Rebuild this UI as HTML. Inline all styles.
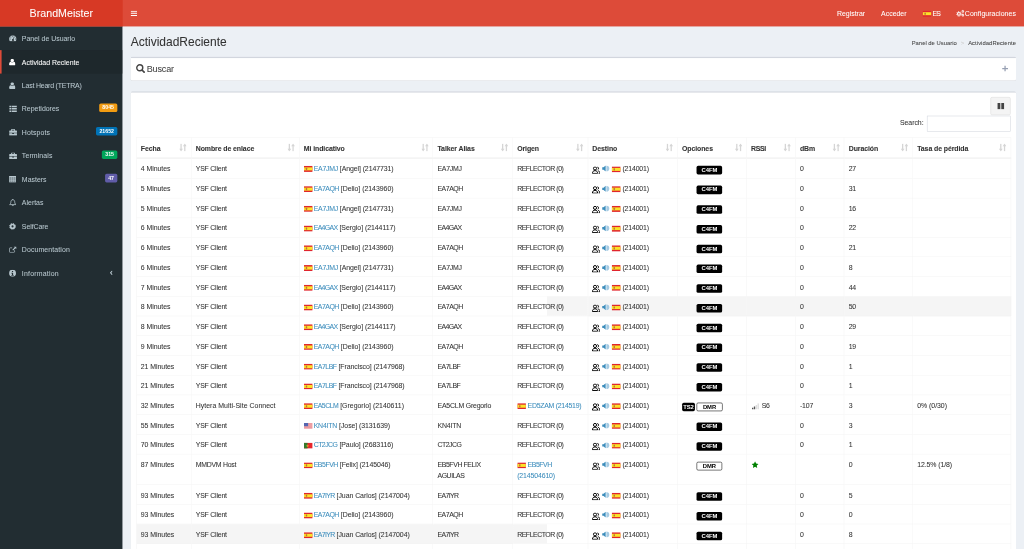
<!DOCTYPE html>
<html lang="es"><head><meta charset="utf-8"><title>BrandMeister - ActividadReciente</title>
<style>
*{box-sizing:border-box}
html,body{margin:0;padding:0;width:1024px;height:549px;overflow:hidden;background:#ecf0f5}
body{font-family:"Liberation Sans",sans-serif;font-size:13px;line-height:20px;color:#333}
#wrap{filter:opacity(1);-webkit-text-stroke:.1px;position:absolute;left:0;top:0;width:1920px;height:1030px;transform:scale(.533333);transform-origin:0 0;background:#ecf0f5;overflow:hidden}
a{color:#3c8dbc;text-decoration:none}
ul,ol{list-style:none;margin:0;padding:0}
svg.ic{display:inline-block;vertical-align:middle}
svg.flag{display:inline-block;vertical-align:middle}
/* header */
.hdr{position:absolute;left:0;top:0;width:1920px;height:50px;background:#dd4b39}
.logo{position:absolute;left:0;top:0;width:230px;height:50px;background:#d73925;color:#fff;font-size:20px;line-height:50px;text-align:center}
.nav{position:absolute;left:230px;right:0;top:0;height:50px;color:#fff}
.tog{position:absolute;left:15px;top:0;height:50px;line-height:48px;color:#fff}
.menu{position:absolute;right:0;top:0;height:50px;display:flex}
.menu li{padding:0 15px;line-height:50px;color:#fff;font-size:13px;white-space:nowrap}
.menu li span{position:relative;top:.8px}
.menu li svg.flag{top:.3px !important}
.menu li svg{position:relative;top:-1px}
.menu .es{letter-spacing:-1.300px;margin-left:2px}
.menu .cfg span{margin-left:.7px;letter-spacing:.13px}
/* sidebar */
.side{position:absolute;left:0;top:50px;width:230px;bottom:0;background:#222d32}
.side li a{display:block;height:44px;padding:12px 5px 12px 15px;color:#b8c7ce;border-left:3px solid transparent;position:relative;white-space:nowrap}
.side li.active a{color:#fff;background:#1e282c;border-left-color:#dd4b39}
.si{display:inline-block;width:23px;position:relative;left:-1px;top:-.5px}
.st{display:inline-block;position:relative;top:1px}
.bdg{position:absolute;right:10px;top:11.500px;height:16px;font-size:9.800px;font-weight:700;color:#fff;line-height:10px;padding:3px 6.300px 3px;border-radius:3px}
.ang{position:absolute;right:19px;top:11px}
/* content */
.cw{position:absolute;left:230px;top:50px;right:0;bottom:0;background:#ecf0f5}
.ch{position:relative;padding:15px 15px 0 15px;height:41.400px}
.ch h1{margin:0;font-size:22.500px;font-weight:400;line-height:26.400px;color:#333;position:relative;top:1.900px}
.bc{position:absolute;right:15px;top:20.500px;font-size:11px;display:flex;color:#444}
.bc li:last-child{letter-spacing:.1px}
.bc .sep{padding:0 7.500px;color:#ccc}
.content{padding:15px}
.box{position:relative;background:#fff;border-top:3px solid #d2d6de;border-radius:3px;margin-bottom:20px;box-shadow:0 1px 1px rgba(0,0,0,.1)}
.bh{padding:10px;height:41.500px;position:relative}
.bh h3{margin:0;font-size:17px;font-weight:400;line-height:20px;color:#444;position:relative;top:0px}
.bh h3 svg{position:relative;top:-1px}
.bh h3 span{margin-left:3px;letter-spacing:-.3px;position:relative;top:1px}
.tools{position:absolute;right:15px;top:9px;color:#97a0b3}
.bb{padding:10px}
.btnrow{height:34.850px;margin-top:-1.450px;text-align:right}
.btn{display:inline-block;width:38px;height:34px;border:1px solid #ddd;background:#f4f4f4;border-radius:3px;text-align:center;line-height:30px;color:#444}
.filter{height:35.150px;text-align:right;padding-top:0}
.filter label{display:inline-flex;align-items:center;height:29.400px;font-weight:400;vertical-align:top}
.sl{letter-spacing:-.08px;position:relative;top:-1px}
.inp{display:inline-block;vertical-align:middle;width:157.300px;height:29.400px;border:1px solid #d2d6de;margin-left:6px;background:#fff}
.tbl{width:1640px;table-layout:fixed;border-collapse:separate;border-spacing:0;margin-top:4.650px;border:1px solid #f4f4f4;border-right-width:0}
.tbl th,.tbl td{padding:9.900px 8px 6.100px;text-align:left;vertical-align:top;border-right:1px solid #f4f4f4;border-bottom:1px solid #f4f4f4;line-height:20px;overflow:hidden;white-space:nowrap}
.tbl th{position:relative;font-weight:700;border-bottom-width:3px;padding:11px 30px 5.700px 8px;letter-spacing:-.15px}
.tbl th.h8{letter-spacing:-.7px}
.srt{position:absolute;right:7.600px;top:7.500px;color:#333;opacity:.2;line-height:20px}
.tbl tr.hr td.c6,.tbl tr.hr td.c7,.tbl tr.hr td.c8,.tbl tr.hr td.c9,.tbl tr.hr td.c10,.tbl tr.hr td.c11{background:#f5f5f5}
.tbl tr.hr td.c5{background:linear-gradient(to right,#fff 63.300px,#f5f5f5 63.300px)}
.tbl tr.hle td.c1,.tbl tr.hle td.c2,.tbl tr.hle td.c3,.tbl tr.hle td.c4{background:#f5f5f5}
.tbl tr.hle td.c5{background:linear-gradient(to right,#f5f5f5 63.300px,#fff 63.300px)}
.c1{letter-spacing:-.08px}
.tg{margin-left:3.300px}
.c9,.c10,.c11{letter-spacing:-.5px}
.c3 svg.flag{margin-right:2px;position:relative;top:-.5px}
.c5 svg.flag{margin-right:3px;position:relative;top:-.5px}

.c4{white-space:normal !important}
.dst{color:#000;position:relative;top:1.100px;left:-1px}
.dst svg,.vol svg{vertical-align:middle}
.vol{margin-left:2.500px;position:relative;top:-1.300px}
.c6 svg.flag{margin-left:4.500px;position:relative;top:-.1px}
.lbl{display:inline-block;font-size:11px;font-weight:700;line-height:15.800px;height:15.800px;padding:0 6px;border-radius:3px;vertical-align:middle;text-align:center;letter-spacing:-.2px;position:relative;top:1.200px}
.blk{background:#000;color:#fff;width:48.500px}
.wht{background:#fff;color:#000;border:1.500px solid #000;width:48.500px;padding:0 4px;line-height:12.800px}
.ts{width:24.400px;padding-left:0;padding-right:0;margin-right:3px;letter-spacing:-.2px}
.tbl td.c7{text-align:right;padding-right:45px}
.star{color:#008000}
.sig{margin-right:5px;margin-left:2px}
.star svg{position:relative;top:-1.500px;left:1px}
.tbl tbody tr:first-child td{padding-top:9.200px;padding-bottom:6.600px}
.bdg,.lbl{-webkit-text-stroke:0}
.tbl th{-webkit-text-stroke:.15px}

</style></head>
<body>
<div id="wrap">
<header class="hdr"><a class="logo">BrandMeister</a><nav class="nav"><a class="tog"><svg class="ic" width="12" height="10" viewBox="0 0 12 10"><path fill="currentColor" d="M0 0h12v2H0zM0 4h12v2H0zM0 8h12v2H0z"/></svg></a><ul class="menu"><li><span>Registrar</span></li><li><span>Acceder</span></li><li class="lang"><svg class="flag" width="16.5" height="11.3" viewBox="0 0 16 11"><rect width="16" height="11" fill="#e0252d"/><rect y="2.750" width="16" height="5.500" fill="#fbe22a"/><rect x="3.200" y="3.600" width="2.600" height="3.800" rx=".6" fill="#c0703a"/></svg><span class="es">ES</span></li><li class="cfg"><svg class="ic" width="15.4" height="14" viewBox="0 0 15.400 14"><g fill="currentColor" fill-rule="evenodd"><path d="M1.2999999999999998 8a3.7 3.7 0 1 0 7.4 0a3.7 3.7 0 1 0 -7.4 0zM3.4 8a1.6 1.6 0 1 0 3.2 0a1.6 1.6 0 1 0 -3.2 0z"/><path d="M10.3 3.5a2.1 2.1 0 1 0 4.2 0a2.1 2.1 0 1 0 -4.2 0zM11.5 3.5a0.9 0.9 0 1 0 1.8 0a0.9 0.9 0 1 0 -1.8 0z"/><path d="M10.3 10.5a2.1 2.1 0 1 0 4.2 0a2.1 2.1 0 1 0 -4.2 0zM11.5 10.5a0.9 0.9 0 1 0 1.8 0a0.9 0.9 0 1 0 -1.8 0z"/></g><g fill="none" stroke="currentColor"><circle cx="5" cy="8" r="4.400" stroke-width="1.700" stroke-dasharray="1.750 1.706"/><circle cx="12.400" cy="3.500" r="2.600" stroke-width="1" stroke-dasharray="1.050 .992"/><circle cx="12.400" cy="10.500" r="2.600" stroke-width="1" stroke-dasharray="1.050 .992"/></g></svg><span>Configuraciones</span></li></ul></nav></header>
<aside class="side"><ul>
<li class=""><a><span class="si"><svg class="ic" width="14" height="12" viewBox="0 0 14 12"><path fill="currentColor" fill-rule="evenodd" d="M7 0a7 7 0 0 1 5.900 10.800c-.2.300-.5.400-.8.400H1.900c-.3 0-.6-.1-.8-.4A7 7 0 0 1 7 0zM6.1 2a0.9 0.9 0 1 0 1.8 0a0.9 0.9 0 1 0 -1.8 0zM2.5 3.5a0.9 0.9 0 1 0 1.8 0a0.9 0.9 0 1 0 -1.8 0zM9.7 3.5a0.9 0.9 0 1 0 1.8 0a0.9 0.9 0 1 0 -1.8 0zM1.1 7a0.9 0.9 0 1 0 1.8 0a0.9 0.9 0 1 0 -1.8 0zM11.1 7a0.9 0.9 0 1 0 1.8 0a0.9 0.9 0 1 0 -1.8 0zM8.500 3.800l.9.300-1.100 3.400a1.800 1.800 0 1 1-.9-.3z"/></svg></span><span class="st">Panel de Usuario</span></a></li>
<li class="active"><a><span class="si"><svg class="ic" width="12" height="13" viewBox="0 0 11 12"><path fill="currentColor" d="M2.5 3a3 3 0 1 0 6 0a3 3 0 1 0 -6 0zM0 10.200c0-2.500.8-4.400 2.600-4.700.8.700 1.800 1.100 2.900 1.100s2.100-.4 2.900-1.100c1.800.3 2.600 2.200 2.600 4.700 0 1.100-.8 1.800-1.800 1.800H1.800c-1 0-1.800-.7-1.800-1.800z"/></svg></span><span class="st">Actividad Reciente</span></a></li>
<li class=""><a><span class="si"><svg class="ic" width="12" height="13" viewBox="0 0 11 12"><path fill="currentColor" d="M2.5 3a3 3 0 1 0 6 0a3 3 0 1 0 -6 0zM0 10.200c0-2.500.8-4.400 2.600-4.700.8.700 1.800 1.100 2.900 1.100s2.100-.4 2.900-1.100c1.800.3 2.600 2.200 2.600 4.700 0 1.100-.8 1.800-1.800 1.800H1.800c-1 0-1.800-.7-1.800-1.800z"/></svg></span><span class="st" style="letter-spacing:-.36px">Last Heard (TETRA)</span></a></li>
<li class=""><a><span class="si"><svg class="ic" width="15" height="12" viewBox="0 0 14 12"><path fill="currentColor" d="M0 0h3.600v3H0zm4.600 0H14v3H4.600zM0 4.500h3.600v3H0zm4.600 0H14v3H4.600zM0 9h3.600v3H0zm4.600 0H14v3H4.600z"/></svg></span><span class="st">Repetidores</span><small class="bdg" style="background:#f39c12">8045</small></a></li>
<li class=""><a><span class="si"><svg class="ic" width="15" height="12.5" viewBox="0 0 14 12"><path fill="currentColor" fill-rule="evenodd" d="M4.500 0h5c.55 0 1 .45 1 1v1.500H13c.55 0 1 .45 1 1v3H0v-3c0-.55.45-1 1-1h2.500V1c0-.55.45-1 1-1zM5 1.200v1.300h4V1.200zM0 7.500h5.500v1.300h3V7.500H14V11c0 .55-.45 1-1 1H1c-.55 0-1-.45-1-1z"/></svg></span><span class="st" style="letter-spacing:.2px">Hotspots</span><small class="bdg" style="background:#0073b7">21652</small></a></li>
<li class=""><a><span class="si"><svg class="ic" width="15" height="12.5" viewBox="0 0 14 12"><path fill="currentColor" fill-rule="evenodd" d="M4.500 0h5c.55 0 1 .45 1 1v1.500H13c.55 0 1 .45 1 1v3H0v-3c0-.55.45-1 1-1h2.500V1c0-.55.45-1 1-1zM5 1.200v1.300h4V1.200zM0 7.500h5.500v1.300h3V7.500H14V11c0 .55-.45 1-1 1H1c-.55 0-1-.45-1-1z"/></svg></span><span class="st" style="letter-spacing:.2px">Terminals</span><small class="bdg" style="background:#00a65a">315</small></a></li>
<li class=""><a><span class="si"><svg class="ic" width="13" height="12" viewBox="0 0 13 12"><rect width="13" height="12" rx="1" fill="currentColor" opacity=".55"/><path fill="currentColor" d="M0 0h13v2.200H0zM0 5h13v1.300H0zM0 8.300h13v1.300H0zM0 11h13v1H0zM0 0h1v12H0zM12 0h1v12h-1zM4.300 0h.9v12h-.9zM8 0h.9v12H8z"/></svg></span><span class="st">Masters</span><small class="bdg" style="background:#605ca8">47</small></a></li>
<li class=""><a><span class="si"><svg class="ic" width="14" height="14" viewBox="0 0 14 14"><path fill="none" stroke="currentColor" stroke-width="1.450" stroke-linejoin="round" d="M7 1.600c-2.300 0-3.600 1.700-3.600 3.800 0 2.700-.9 4-2.400 5.200h12c-1.500-1.200-2.400-2.500-2.400-5.200 0-2.100-1.300-3.800-3.600-3.800zM5.600 11.200a1.400 1.400 0 0 0 2.800 0"/><circle cx="7" cy=".9" r=".9" fill="currentColor"/></svg></span><span class="st">Alertas</span></a></li>
<li class=""><a><span class="si"><svg class="ic" width="13" height="13" viewBox="0 0 12 12"><path fill="currentColor" fill-rule="evenodd" d="M1.2000000000000002 6a4.8 4.8 0 1 0 9.6 0a4.8 4.8 0 1 0 -9.6 0zM4.2 6a1.8 1.8 0 1 0 3.6 0a1.8 1.8 0 1 0 -3.6 0z"/><circle cx="6" cy="6" r="5.200" fill="none" stroke="currentColor" stroke-width="1.600" stroke-dasharray="2.100 1.984"/></svg></span><span class="st" style="letter-spacing:-.15px">SelfCare</span></a></li>
<li class=""><a><span class="si"><svg class="ic" width="14" height="12" viewBox="0 0 14 12"><path fill="none" stroke="currentColor" stroke-width="1.400" stroke-linejoin="round" d="M10.300 7.300v2.800c0 .7-.5 1.200-1.200 1.200H1.900c-.7 0-1.200-.5-1.200-1.200V3.900c0-.7.5-1.200 1.200-1.200h3.900"/><path fill="currentColor" d="M8.500 0H14v5.500l-2-2-4.300 4.300-1.500-1.500L10.500 2z"/></svg></span><span class="st" style="letter-spacing:.2px">Documentation</span></a></li>
<li class=""><a><span class="si"><svg class="ic" width="13" height="13" viewBox="1 1 14 14"><path fill="currentColor" fill-rule="evenodd" d="M8 1a7 7 0 1 1 0 14A7 7 0 0 1 8 1zm-1.200 2.300v2h2.400v-2zm-1.200 3.500v1.300h1.200v3.500H5.600v1.300h4.800v-1.300H9.200V6.800z"/></svg></span><span class="st" style="letter-spacing:.38px">Information</span><span class="ang"><svg class="ic" width="5.5" height="9" viewBox="0 0 5.500 9"><path fill="none" stroke="currentColor" stroke-width="1.900" d="M4.700.7 1.300 4.500l3.400 3.800"/></svg></span></a></li>
</ul></aside>
<div class="cw">
<section class="ch"><h1>ActividadReciente</h1><ol class="bc"><li>Panel de Usuario</li><li class="sep">&gt;</li><li>ActividadReciente</li></ol></section>
<section class="content">
<div class="box b1"><div class="bh"><h3><svg class="ic" width="17" height="17" viewBox="0 0 15.400 15.400"><circle cx="6.400" cy="6.400" r="5.100" fill="none" stroke="currentColor" stroke-width="2.400"/><path stroke="currentColor" stroke-width="2.900" stroke-linecap="round" d="M10.600 10.600 13.800 13.800"/></svg><span>Buscar</span></h3><span class="tools"><svg class="ic" width="11" height="11" viewBox="2.500 2.500 11 11"><path fill="currentColor" d="M6.800 2.500h2.400v4.300h4.300v2.400H9.200v4.300H6.800V9.200H2.500V6.800h4.300z"/></svg></span></div></div>
<div class="box b2"><div class="bb">
<div class="btnrow"><a class="btn"><svg class="ic" width="13" height="12.5" viewBox="0 0 13 12.500"><path fill="currentColor" d="M.4 0h4.800c.2 0 .4.200.4.400v11.700c0 .2-.2.400-.4.400H.4c-.2 0-.4-.2-.4-.4V.4C0 .2.200 0 .4 0zm7.400 0h4.800c.2 0 .4.200.4.400v11.700c0 .2-.2.400-.4.400H7.800c-.2 0-.4-.2-.4-.4V.4c0-.2.200-.4.400-.4z"/></svg></a></div>
<div class="filter"><label><span class="sl">Search:</span><span class="inp"></span></label></div>
<table class="tbl"><colgroup><col style="width:103px"><col style="width:202.6px"><col style="width:250.7px"><col style="width:149.4px"><col style="width:141px"><col style="width:168px"><col style="width:129.7px"><col style="width:91.5px"><col style="width:91.5px"><col style="width:128.4px"><col style="width:184px"></colgroup>
<thead><tr><th class="h1"><span>Fecha</span><i class="srt"><svg class="ic" width="14" height="15" viewBox="0 0 14 15"><path fill="currentColor" d="M2.300 .5h2.400V10H7L3.500 15 0 10h2.300zM11.700 14.500H9.300V5H7L10.500 0 14 5h-2.300z"/></svg></i></th><th class="h2"><span>Nombre de enlace</span><i class="srt"><svg class="ic" width="14" height="15" viewBox="0 0 14 15"><path fill="currentColor" d="M2.300 .5h2.400V10H7L3.500 15 0 10h2.300zM11.700 14.500H9.300V5H7L10.500 0 14 5h-2.300z"/></svg></i></th><th class="h3"><span>Mi indicativo</span><i class="srt"><svg class="ic" width="14" height="15" viewBox="0 0 14 15"><path fill="currentColor" d="M2.300 .5h2.400V10H7L3.500 15 0 10h2.300zM11.700 14.500H9.300V5H7L10.500 0 14 5h-2.300z"/></svg></i></th><th class="h4"><span>Talker Alias</span><i class="srt"><svg class="ic" width="14" height="15" viewBox="0 0 14 15"><path fill="currentColor" d="M2.300 .5h2.400V10H7L3.500 15 0 10h2.300zM11.700 14.500H9.300V5H7L10.500 0 14 5h-2.300z"/></svg></i></th><th class="h5"><span>Origen</span><i class="srt"><svg class="ic" width="14" height="15" viewBox="0 0 14 15"><path fill="currentColor" d="M2.300 .5h2.400V10H7L3.500 15 0 10h2.300zM11.700 14.500H9.300V5H7L10.500 0 14 5h-2.300z"/></svg></i></th><th class="h6"><span>Destino</span><i class="srt"><svg class="ic" width="14" height="15" viewBox="0 0 14 15"><path fill="currentColor" d="M2.300 .5h2.400V10H7L3.500 15 0 10h2.300zM11.700 14.500H9.300V5H7L10.500 0 14 5h-2.300z"/></svg></i></th><th class="h7"><span>Opciones</span><i class="srt"><svg class="ic" width="14" height="15" viewBox="0 0 14 15"><path fill="currentColor" d="M2.300 .5h2.400V10H7L3.500 15 0 10h2.300zM11.700 14.500H9.300V5H7L10.500 0 14 5h-2.300z"/></svg></i></th><th class="h8"><span>RSSI</span><i class="srt"><svg class="ic" width="14" height="15" viewBox="0 0 14 15"><path fill="currentColor" d="M2.300 .5h2.400V10H7L3.500 15 0 10h2.300zM11.700 14.500H9.300V5H7L10.500 0 14 5h-2.300z"/></svg></i></th><th class="h9"><span>dBm</span><i class="srt"><svg class="ic" width="14" height="15" viewBox="0 0 14 15"><path fill="currentColor" d="M2.300 .5h2.400V10H7L3.500 15 0 10h2.300zM11.700 14.500H9.300V5H7L10.500 0 14 5h-2.300z"/></svg></i></th><th class="h10"><span>Duración</span><i class="srt"><svg class="ic" width="14" height="15" viewBox="0 0 14 15"><path fill="currentColor" d="M2.300 .5h2.400V10H7L3.500 15 0 10h2.300zM11.700 14.500H9.300V5H7L10.500 0 14 5h-2.300z"/></svg></i></th><th class="h11"><span>Tasa de pérdida</span><i class="srt"><svg class="ic" width="14" height="15" viewBox="0 0 14 15"><path fill="currentColor" d="M2.300 .5h2.400V10H7L3.500 15 0 10h2.300zM11.700 14.500H9.300V5H7L10.500 0 14 5h-2.300z"/></svg></i></th></tr></thead>
<tbody>
<tr><td class="c1">4 Minutes</td><td class="c2"><span style="letter-spacing:-0.40px">YSF Client</span></td><td class="c3"><svg class="flag" width="16.5" height="11.3" viewBox="0 0 16 11"><rect width="16" height="11" fill="#e0252d"/><rect y="2.750" width="16" height="5.500" fill="#fbe22a"/><rect x="3.200" y="3.600" width="2.600" height="3.800" rx=".6" fill="#c0703a"/></svg><a style="letter-spacing:-0.48px">EA7JMJ</a> <span style="letter-spacing:-0.17px">[Angel] (2147731)</span></td><td class="c4"><span style="letter-spacing:-0.48px">EA7JMJ</span></td><td class="c5"><span style="letter-spacing:-0.87px">REFLECTOR (0)</span></td><td class="c6"><span class="dst"><svg class="ic" width="15.5" height="14" viewBox=".2 .8 15.900 14.200"><g fill="none" stroke="currentColor" stroke-width="1.900"><circle cx="6" cy="4.600" r="3"/><path d="M1 14.200c0-3.300 1.600-5.300 5-5.300s5 2 5 5.300z" stroke-linejoin="round"/><path d="M10.500 1.800a2.800 2.800 0 0 1 .6 5.300M12 9.200c2.300.4 3.300 2.200 3.300 5H13"/></g></svg></span><span class="vol"><svg class="ic" width="14" height="12" viewBox="0 0 14 12"><path fill="#a5cbe3" d="M8 .3c3.600.6 5.800 2.900 5.800 5.700s-2.200 5.100-5.800 5.700z"/><path fill="#3c8dbc" d="M0 3.800h2.700L6.600.5v11L2.700 8.200H0z"/></svg></span><svg class="flag" width="16.5" height="11.3" viewBox="0 0 16 11"><rect width="16" height="11" fill="#e0252d"/><rect y="2.750" width="16" height="5.500" fill="#fbe22a"/><rect x="3.200" y="3.600" width="2.600" height="3.800" rx=".6" fill="#c0703a"/></svg><span class="tg" style="letter-spacing:-0.28px">(214001)</span></td><td class="c7"><span class="lbl blk">C4FM</span></td><td class="c8"></td><td class="c9">0</td><td class="c10">27</td><td class="c11"></td></tr>
<tr><td class="c1">5 Minutes</td><td class="c2"><span style="letter-spacing:-0.40px">YSF Client</span></td><td class="c3"><svg class="flag" width="16.5" height="11.3" viewBox="0 0 16 11"><rect width="16" height="11" fill="#e0252d"/><rect y="2.750" width="16" height="5.500" fill="#fbe22a"/><rect x="3.200" y="3.600" width="2.600" height="3.800" rx=".6" fill="#c0703a"/></svg><a style="letter-spacing:-0.91px">EA7AQH</a> <span style="letter-spacing:-0.05px">[Delio] (2143960)</span></td><td class="c4"><span style="letter-spacing:-0.91px">EA7AQH</span></td><td class="c5"><span style="letter-spacing:-0.87px">REFLECTOR (0)</span></td><td class="c6"><span class="dst"><svg class="ic" width="15.5" height="14" viewBox=".2 .8 15.900 14.200"><g fill="none" stroke="currentColor" stroke-width="1.900"><circle cx="6" cy="4.600" r="3"/><path d="M1 14.200c0-3.300 1.600-5.300 5-5.300s5 2 5 5.300z" stroke-linejoin="round"/><path d="M10.500 1.800a2.800 2.800 0 0 1 .6 5.300M12 9.200c2.300.4 3.300 2.200 3.300 5H13"/></g></svg></span><span class="vol"><svg class="ic" width="14" height="12" viewBox="0 0 14 12"><path fill="#a5cbe3" d="M8 .3c3.600.6 5.800 2.900 5.800 5.700s-2.200 5.100-5.800 5.700z"/><path fill="#3c8dbc" d="M0 3.800h2.700L6.600.5v11L2.700 8.200H0z"/></svg></span><svg class="flag" width="16.5" height="11.3" viewBox="0 0 16 11"><rect width="16" height="11" fill="#e0252d"/><rect y="2.750" width="16" height="5.500" fill="#fbe22a"/><rect x="3.200" y="3.600" width="2.600" height="3.800" rx=".6" fill="#c0703a"/></svg><span class="tg" style="letter-spacing:-0.28px">(214001)</span></td><td class="c7"><span class="lbl blk">C4FM</span></td><td class="c8"></td><td class="c9">0</td><td class="c10">31</td><td class="c11"></td></tr>
<tr><td class="c1">5 Minutes</td><td class="c2"><span style="letter-spacing:-0.40px">YSF Client</span></td><td class="c3"><svg class="flag" width="16.5" height="11.3" viewBox="0 0 16 11"><rect width="16" height="11" fill="#e0252d"/><rect y="2.750" width="16" height="5.500" fill="#fbe22a"/><rect x="3.200" y="3.600" width="2.600" height="3.800" rx=".6" fill="#c0703a"/></svg><a style="letter-spacing:-0.48px">EA7JMJ</a> <span style="letter-spacing:-0.17px">[Angel] (2147731)</span></td><td class="c4"><span style="letter-spacing:-0.48px">EA7JMJ</span></td><td class="c5"><span style="letter-spacing:-0.87px">REFLECTOR (0)</span></td><td class="c6"><span class="dst"><svg class="ic" width="15.5" height="14" viewBox=".2 .8 15.900 14.200"><g fill="none" stroke="currentColor" stroke-width="1.900"><circle cx="6" cy="4.600" r="3"/><path d="M1 14.200c0-3.300 1.600-5.300 5-5.300s5 2 5 5.300z" stroke-linejoin="round"/><path d="M10.500 1.800a2.800 2.800 0 0 1 .6 5.300M12 9.200c2.300.4 3.300 2.200 3.300 5H13"/></g></svg></span><span class="vol"><svg class="ic" width="14" height="12" viewBox="0 0 14 12"><path fill="#a5cbe3" d="M8 .3c3.600.6 5.800 2.900 5.800 5.700s-2.200 5.100-5.800 5.700z"/><path fill="#3c8dbc" d="M0 3.800h2.700L6.600.5v11L2.700 8.200H0z"/></svg></span><svg class="flag" width="16.5" height="11.3" viewBox="0 0 16 11"><rect width="16" height="11" fill="#e0252d"/><rect y="2.750" width="16" height="5.500" fill="#fbe22a"/><rect x="3.200" y="3.600" width="2.600" height="3.800" rx=".6" fill="#c0703a"/></svg><span class="tg" style="letter-spacing:-0.28px">(214001)</span></td><td class="c7"><span class="lbl blk">C4FM</span></td><td class="c8"></td><td class="c9">0</td><td class="c10">16</td><td class="c11"></td></tr>
<tr><td class="c1">6 Minutes</td><td class="c2"><span style="letter-spacing:-0.40px">YSF Client</span></td><td class="c3"><svg class="flag" width="16.5" height="11.3" viewBox="0 0 16 11"><rect width="16" height="11" fill="#e0252d"/><rect y="2.750" width="16" height="5.500" fill="#fbe22a"/><rect x="3.200" y="3.600" width="2.600" height="3.800" rx=".6" fill="#c0703a"/></svg><a style="letter-spacing:-1.21px">EA4GAX</a> <span style="letter-spacing:-0.08px">[Sergio] (2144117)</span></td><td class="c4"><span style="letter-spacing:-1.21px">EA4GAX</span></td><td class="c5"><span style="letter-spacing:-0.87px">REFLECTOR (0)</span></td><td class="c6"><span class="dst"><svg class="ic" width="15.5" height="14" viewBox=".2 .8 15.900 14.200"><g fill="none" stroke="currentColor" stroke-width="1.900"><circle cx="6" cy="4.600" r="3"/><path d="M1 14.200c0-3.300 1.600-5.300 5-5.300s5 2 5 5.300z" stroke-linejoin="round"/><path d="M10.500 1.800a2.800 2.800 0 0 1 .6 5.300M12 9.200c2.300.4 3.300 2.200 3.300 5H13"/></g></svg></span><span class="vol"><svg class="ic" width="14" height="12" viewBox="0 0 14 12"><path fill="#a5cbe3" d="M8 .3c3.600.6 5.800 2.900 5.800 5.700s-2.200 5.100-5.800 5.700z"/><path fill="#3c8dbc" d="M0 3.800h2.700L6.600.5v11L2.700 8.200H0z"/></svg></span><svg class="flag" width="16.5" height="11.3" viewBox="0 0 16 11"><rect width="16" height="11" fill="#e0252d"/><rect y="2.750" width="16" height="5.500" fill="#fbe22a"/><rect x="3.200" y="3.600" width="2.600" height="3.800" rx=".6" fill="#c0703a"/></svg><span class="tg" style="letter-spacing:-0.28px">(214001)</span></td><td class="c7"><span class="lbl blk">C4FM</span></td><td class="c8"></td><td class="c9">0</td><td class="c10">22</td><td class="c11"></td></tr>
<tr><td class="c1">6 Minutes</td><td class="c2"><span style="letter-spacing:-0.40px">YSF Client</span></td><td class="c3"><svg class="flag" width="16.5" height="11.3" viewBox="0 0 16 11"><rect width="16" height="11" fill="#e0252d"/><rect y="2.750" width="16" height="5.500" fill="#fbe22a"/><rect x="3.200" y="3.600" width="2.600" height="3.800" rx=".6" fill="#c0703a"/></svg><a style="letter-spacing:-0.91px">EA7AQH</a> <span style="letter-spacing:-0.05px">[Delio] (2143960)</span></td><td class="c4"><span style="letter-spacing:-0.91px">EA7AQH</span></td><td class="c5"><span style="letter-spacing:-0.87px">REFLECTOR (0)</span></td><td class="c6"><span class="dst"><svg class="ic" width="15.5" height="14" viewBox=".2 .8 15.900 14.200"><g fill="none" stroke="currentColor" stroke-width="1.900"><circle cx="6" cy="4.600" r="3"/><path d="M1 14.200c0-3.300 1.600-5.300 5-5.300s5 2 5 5.300z" stroke-linejoin="round"/><path d="M10.500 1.800a2.800 2.800 0 0 1 .6 5.300M12 9.200c2.300.4 3.300 2.200 3.300 5H13"/></g></svg></span><span class="vol"><svg class="ic" width="14" height="12" viewBox="0 0 14 12"><path fill="#a5cbe3" d="M8 .3c3.600.6 5.800 2.900 5.800 5.700s-2.200 5.100-5.800 5.700z"/><path fill="#3c8dbc" d="M0 3.800h2.700L6.600.5v11L2.700 8.200H0z"/></svg></span><svg class="flag" width="16.5" height="11.3" viewBox="0 0 16 11"><rect width="16" height="11" fill="#e0252d"/><rect y="2.750" width="16" height="5.500" fill="#fbe22a"/><rect x="3.200" y="3.600" width="2.600" height="3.800" rx=".6" fill="#c0703a"/></svg><span class="tg" style="letter-spacing:-0.28px">(214001)</span></td><td class="c7"><span class="lbl blk">C4FM</span></td><td class="c8"></td><td class="c9">0</td><td class="c10">21</td><td class="c11"></td></tr>
<tr><td class="c1">6 Minutes</td><td class="c2"><span style="letter-spacing:-0.40px">YSF Client</span></td><td class="c3"><svg class="flag" width="16.5" height="11.3" viewBox="0 0 16 11"><rect width="16" height="11" fill="#e0252d"/><rect y="2.750" width="16" height="5.500" fill="#fbe22a"/><rect x="3.200" y="3.600" width="2.600" height="3.800" rx=".6" fill="#c0703a"/></svg><a style="letter-spacing:-0.48px">EA7JMJ</a> <span style="letter-spacing:-0.17px">[Angel] (2147731)</span></td><td class="c4"><span style="letter-spacing:-0.48px">EA7JMJ</span></td><td class="c5"><span style="letter-spacing:-0.87px">REFLECTOR (0)</span></td><td class="c6"><span class="dst"><svg class="ic" width="15.5" height="14" viewBox=".2 .8 15.900 14.200"><g fill="none" stroke="currentColor" stroke-width="1.900"><circle cx="6" cy="4.600" r="3"/><path d="M1 14.200c0-3.300 1.600-5.300 5-5.300s5 2 5 5.300z" stroke-linejoin="round"/><path d="M10.500 1.800a2.800 2.800 0 0 1 .6 5.300M12 9.200c2.300.4 3.300 2.200 3.300 5H13"/></g></svg></span><span class="vol"><svg class="ic" width="14" height="12" viewBox="0 0 14 12"><path fill="#a5cbe3" d="M8 .3c3.600.6 5.800 2.900 5.800 5.700s-2.200 5.100-5.800 5.700z"/><path fill="#3c8dbc" d="M0 3.800h2.700L6.600.5v11L2.700 8.200H0z"/></svg></span><svg class="flag" width="16.5" height="11.3" viewBox="0 0 16 11"><rect width="16" height="11" fill="#e0252d"/><rect y="2.750" width="16" height="5.500" fill="#fbe22a"/><rect x="3.200" y="3.600" width="2.600" height="3.800" rx=".6" fill="#c0703a"/></svg><span class="tg" style="letter-spacing:-0.28px">(214001)</span></td><td class="c7"><span class="lbl blk">C4FM</span></td><td class="c8"></td><td class="c9">0</td><td class="c10">8</td><td class="c11"></td></tr>
<tr><td class="c1">7 Minutes</td><td class="c2"><span style="letter-spacing:-0.40px">YSF Client</span></td><td class="c3"><svg class="flag" width="16.5" height="11.3" viewBox="0 0 16 11"><rect width="16" height="11" fill="#e0252d"/><rect y="2.750" width="16" height="5.500" fill="#fbe22a"/><rect x="3.200" y="3.600" width="2.600" height="3.800" rx=".6" fill="#c0703a"/></svg><a style="letter-spacing:-1.21px">EA4GAX</a> <span style="letter-spacing:-0.08px">[Sergio] (2144117)</span></td><td class="c4"><span style="letter-spacing:-1.21px">EA4GAX</span></td><td class="c5"><span style="letter-spacing:-0.87px">REFLECTOR (0)</span></td><td class="c6"><span class="dst"><svg class="ic" width="15.5" height="14" viewBox=".2 .8 15.900 14.200"><g fill="none" stroke="currentColor" stroke-width="1.900"><circle cx="6" cy="4.600" r="3"/><path d="M1 14.200c0-3.300 1.600-5.300 5-5.300s5 2 5 5.300z" stroke-linejoin="round"/><path d="M10.500 1.800a2.800 2.800 0 0 1 .6 5.300M12 9.200c2.300.4 3.300 2.200 3.300 5H13"/></g></svg></span><span class="vol"><svg class="ic" width="14" height="12" viewBox="0 0 14 12"><path fill="#a5cbe3" d="M8 .3c3.600.6 5.800 2.900 5.800 5.700s-2.200 5.100-5.800 5.700z"/><path fill="#3c8dbc" d="M0 3.800h2.700L6.600.5v11L2.700 8.200H0z"/></svg></span><svg class="flag" width="16.5" height="11.3" viewBox="0 0 16 11"><rect width="16" height="11" fill="#e0252d"/><rect y="2.750" width="16" height="5.500" fill="#fbe22a"/><rect x="3.200" y="3.600" width="2.600" height="3.800" rx=".6" fill="#c0703a"/></svg><span class="tg" style="letter-spacing:-0.28px">(214001)</span></td><td class="c7"><span class="lbl blk">C4FM</span></td><td class="c8"></td><td class="c9">0</td><td class="c10">44</td><td class="c11"></td></tr>
<tr class="hr"><td class="c1">8 Minutes</td><td class="c2"><span style="letter-spacing:-0.40px">YSF Client</span></td><td class="c3"><svg class="flag" width="16.5" height="11.3" viewBox="0 0 16 11"><rect width="16" height="11" fill="#e0252d"/><rect y="2.750" width="16" height="5.500" fill="#fbe22a"/><rect x="3.200" y="3.600" width="2.600" height="3.800" rx=".6" fill="#c0703a"/></svg><a style="letter-spacing:-0.91px">EA7AQH</a> <span style="letter-spacing:-0.05px">[Delio] (2143960)</span></td><td class="c4"><span style="letter-spacing:-0.91px">EA7AQH</span></td><td class="c5"><span style="letter-spacing:-0.87px">REFLECTOR (0)</span></td><td class="c6"><span class="dst"><svg class="ic" width="15.5" height="14" viewBox=".2 .8 15.900 14.200"><g fill="none" stroke="currentColor" stroke-width="1.900"><circle cx="6" cy="4.600" r="3"/><path d="M1 14.200c0-3.300 1.600-5.300 5-5.300s5 2 5 5.300z" stroke-linejoin="round"/><path d="M10.500 1.800a2.800 2.800 0 0 1 .6 5.300M12 9.200c2.300.4 3.300 2.200 3.300 5H13"/></g></svg></span><span class="vol"><svg class="ic" width="14" height="12" viewBox="0 0 14 12"><path fill="#a5cbe3" d="M8 .3c3.600.6 5.800 2.900 5.800 5.700s-2.200 5.100-5.800 5.700z"/><path fill="#3c8dbc" d="M0 3.800h2.700L6.600.5v11L2.700 8.200H0z"/></svg></span><svg class="flag" width="16.5" height="11.3" viewBox="0 0 16 11"><rect width="16" height="11" fill="#e0252d"/><rect y="2.750" width="16" height="5.500" fill="#fbe22a"/><rect x="3.200" y="3.600" width="2.600" height="3.800" rx=".6" fill="#c0703a"/></svg><span class="tg" style="letter-spacing:-0.28px">(214001)</span></td><td class="c7"><span class="lbl blk">C4FM</span></td><td class="c8"></td><td class="c9">0</td><td class="c10">50</td><td class="c11"></td></tr>
<tr><td class="c1">8 Minutes</td><td class="c2"><span style="letter-spacing:-0.40px">YSF Client</span></td><td class="c3"><svg class="flag" width="16.5" height="11.3" viewBox="0 0 16 11"><rect width="16" height="11" fill="#e0252d"/><rect y="2.750" width="16" height="5.500" fill="#fbe22a"/><rect x="3.200" y="3.600" width="2.600" height="3.800" rx=".6" fill="#c0703a"/></svg><a style="letter-spacing:-1.21px">EA4GAX</a> <span style="letter-spacing:-0.08px">[Sergio] (2144117)</span></td><td class="c4"><span style="letter-spacing:-1.21px">EA4GAX</span></td><td class="c5"><span style="letter-spacing:-0.87px">REFLECTOR (0)</span></td><td class="c6"><span class="dst"><svg class="ic" width="15.5" height="14" viewBox=".2 .8 15.900 14.200"><g fill="none" stroke="currentColor" stroke-width="1.900"><circle cx="6" cy="4.600" r="3"/><path d="M1 14.200c0-3.300 1.600-5.300 5-5.300s5 2 5 5.300z" stroke-linejoin="round"/><path d="M10.500 1.800a2.800 2.800 0 0 1 .6 5.300M12 9.200c2.300.4 3.300 2.200 3.300 5H13"/></g></svg></span><span class="vol"><svg class="ic" width="14" height="12" viewBox="0 0 14 12"><path fill="#a5cbe3" d="M8 .3c3.600.6 5.800 2.900 5.800 5.700s-2.200 5.100-5.800 5.700z"/><path fill="#3c8dbc" d="M0 3.800h2.700L6.600.5v11L2.700 8.200H0z"/></svg></span><svg class="flag" width="16.5" height="11.3" viewBox="0 0 16 11"><rect width="16" height="11" fill="#e0252d"/><rect y="2.750" width="16" height="5.500" fill="#fbe22a"/><rect x="3.200" y="3.600" width="2.600" height="3.800" rx=".6" fill="#c0703a"/></svg><span class="tg" style="letter-spacing:-0.28px">(214001)</span></td><td class="c7"><span class="lbl blk">C4FM</span></td><td class="c8"></td><td class="c9">0</td><td class="c10">29</td><td class="c11"></td></tr>
<tr><td class="c1">9 Minutes</td><td class="c2"><span style="letter-spacing:-0.40px">YSF Client</span></td><td class="c3"><svg class="flag" width="16.5" height="11.3" viewBox="0 0 16 11"><rect width="16" height="11" fill="#e0252d"/><rect y="2.750" width="16" height="5.500" fill="#fbe22a"/><rect x="3.200" y="3.600" width="2.600" height="3.800" rx=".6" fill="#c0703a"/></svg><a style="letter-spacing:-0.91px">EA7AQH</a> <span style="letter-spacing:-0.05px">[Delio] (2143960)</span></td><td class="c4"><span style="letter-spacing:-0.91px">EA7AQH</span></td><td class="c5"><span style="letter-spacing:-0.87px">REFLECTOR (0)</span></td><td class="c6"><span class="dst"><svg class="ic" width="15.5" height="14" viewBox=".2 .8 15.900 14.200"><g fill="none" stroke="currentColor" stroke-width="1.900"><circle cx="6" cy="4.600" r="3"/><path d="M1 14.200c0-3.300 1.600-5.300 5-5.300s5 2 5 5.300z" stroke-linejoin="round"/><path d="M10.500 1.800a2.800 2.800 0 0 1 .6 5.300M12 9.200c2.300.4 3.300 2.200 3.300 5H13"/></g></svg></span><span class="vol"><svg class="ic" width="14" height="12" viewBox="0 0 14 12"><path fill="#a5cbe3" d="M8 .3c3.600.6 5.800 2.900 5.800 5.700s-2.200 5.100-5.800 5.700z"/><path fill="#3c8dbc" d="M0 3.800h2.700L6.600.5v11L2.700 8.200H0z"/></svg></span><svg class="flag" width="16.5" height="11.3" viewBox="0 0 16 11"><rect width="16" height="11" fill="#e0252d"/><rect y="2.750" width="16" height="5.500" fill="#fbe22a"/><rect x="3.200" y="3.600" width="2.600" height="3.800" rx=".6" fill="#c0703a"/></svg><span class="tg" style="letter-spacing:-0.28px">(214001)</span></td><td class="c7"><span class="lbl blk">C4FM</span></td><td class="c8"></td><td class="c9">0</td><td class="c10">19</td><td class="c11"></td></tr>
<tr><td class="c1">21 Minutes</td><td class="c2"><span style="letter-spacing:-0.40px">YSF Client</span></td><td class="c3"><svg class="flag" width="16.5" height="11.3" viewBox="0 0 16 11"><rect width="16" height="11" fill="#e0252d"/><rect y="2.750" width="16" height="5.500" fill="#fbe22a"/><rect x="3.200" y="3.600" width="2.600" height="3.800" rx=".6" fill="#c0703a"/></svg><a style="letter-spacing:-0.92px">EA7LBF</a> <span style="letter-spacing:-0.12px">[Francisco] (2147968)</span></td><td class="c4"><span style="letter-spacing:-0.92px">EA7LBF</span></td><td class="c5"><span style="letter-spacing:-0.87px">REFLECTOR (0)</span></td><td class="c6"><span class="dst"><svg class="ic" width="15.5" height="14" viewBox=".2 .8 15.900 14.200"><g fill="none" stroke="currentColor" stroke-width="1.900"><circle cx="6" cy="4.600" r="3"/><path d="M1 14.200c0-3.300 1.600-5.300 5-5.300s5 2 5 5.300z" stroke-linejoin="round"/><path d="M10.500 1.800a2.800 2.800 0 0 1 .6 5.300M12 9.200c2.300.4 3.300 2.200 3.300 5H13"/></g></svg></span><span class="vol"><svg class="ic" width="14" height="12" viewBox="0 0 14 12"><path fill="#a5cbe3" d="M8 .3c3.600.6 5.800 2.900 5.800 5.700s-2.200 5.100-5.800 5.700z"/><path fill="#3c8dbc" d="M0 3.800h2.700L6.600.5v11L2.700 8.200H0z"/></svg></span><svg class="flag" width="16.5" height="11.3" viewBox="0 0 16 11"><rect width="16" height="11" fill="#e0252d"/><rect y="2.750" width="16" height="5.500" fill="#fbe22a"/><rect x="3.200" y="3.600" width="2.600" height="3.800" rx=".6" fill="#c0703a"/></svg><span class="tg" style="letter-spacing:-0.28px">(214001)</span></td><td class="c7"><span class="lbl blk">C4FM</span></td><td class="c8"></td><td class="c9">0</td><td class="c10">1</td><td class="c11"></td></tr>
<tr><td class="c1">21 Minutes</td><td class="c2"><span style="letter-spacing:-0.40px">YSF Client</span></td><td class="c3"><svg class="flag" width="16.5" height="11.3" viewBox="0 0 16 11"><rect width="16" height="11" fill="#e0252d"/><rect y="2.750" width="16" height="5.500" fill="#fbe22a"/><rect x="3.200" y="3.600" width="2.600" height="3.800" rx=".6" fill="#c0703a"/></svg><a style="letter-spacing:-0.92px">EA7LBF</a> <span style="letter-spacing:-0.12px">[Francisco] (2147968)</span></td><td class="c4"><span style="letter-spacing:-0.92px">EA7LBF</span></td><td class="c5"><span style="letter-spacing:-0.87px">REFLECTOR (0)</span></td><td class="c6"><span class="dst"><svg class="ic" width="15.5" height="14" viewBox=".2 .8 15.900 14.200"><g fill="none" stroke="currentColor" stroke-width="1.900"><circle cx="6" cy="4.600" r="3"/><path d="M1 14.200c0-3.300 1.600-5.300 5-5.300s5 2 5 5.300z" stroke-linejoin="round"/><path d="M10.500 1.800a2.800 2.800 0 0 1 .6 5.300M12 9.200c2.300.4 3.300 2.200 3.300 5H13"/></g></svg></span><span class="vol"><svg class="ic" width="14" height="12" viewBox="0 0 14 12"><path fill="#a5cbe3" d="M8 .3c3.600.6 5.800 2.900 5.800 5.700s-2.200 5.100-5.800 5.700z"/><path fill="#3c8dbc" d="M0 3.800h2.700L6.600.5v11L2.700 8.200H0z"/></svg></span><svg class="flag" width="16.5" height="11.3" viewBox="0 0 16 11"><rect width="16" height="11" fill="#e0252d"/><rect y="2.750" width="16" height="5.500" fill="#fbe22a"/><rect x="3.200" y="3.600" width="2.600" height="3.800" rx=".6" fill="#c0703a"/></svg><span class="tg" style="letter-spacing:-0.28px">(214001)</span></td><td class="c7"><span class="lbl blk">C4FM</span></td><td class="c8"></td><td class="c9">0</td><td class="c10">1</td><td class="c11"></td></tr>
<tr class="dmr1"><td class="c1">32 Minutes</td><td class="c2"><span style="letter-spacing:0.06px">Hytera Multi-Site Connect</span></td><td class="c3"><svg class="flag" width="16.5" height="11.3" viewBox="0 0 16 11"><rect width="16" height="11" fill="#e0252d"/><rect y="2.750" width="16" height="5.500" fill="#fbe22a"/><rect x="3.200" y="3.600" width="2.600" height="3.800" rx=".6" fill="#c0703a"/></svg><a style="letter-spacing:-0.98px">EA5CLM</a> <span style="letter-spacing:-0.01px">[Gregorio] (2140611)</span></td><td class="c4"><span style="letter-spacing:-0.38px">EA5CLM Gregorio</span></td><td class="c5"><svg class="flag" width="16.5" height="11.3" viewBox="0 0 16 11"><rect width="16" height="11" fill="#e0252d"/><rect y="2.750" width="16" height="5.500" fill="#fbe22a"/><rect x="3.200" y="3.600" width="2.600" height="3.800" rx=".6" fill="#c0703a"/></svg><a class="o" style="letter-spacing:-0.51px">ED5ZAM (214519)</a></td><td class="c6"><span class="dst"><svg class="ic" width="15.5" height="14" viewBox=".2 .8 15.900 14.200"><g fill="none" stroke="currentColor" stroke-width="1.900"><circle cx="6" cy="4.600" r="3"/><path d="M1 14.200c0-3.300 1.600-5.300 5-5.300s5 2 5 5.300z" stroke-linejoin="round"/><path d="M10.500 1.800a2.800 2.800 0 0 1 .6 5.300M12 9.200c2.300.4 3.300 2.200 3.300 5H13"/></g></svg></span><span class="vol"><svg class="ic" width="14" height="12" viewBox="0 0 14 12"><path fill="#a5cbe3" d="M8 .3c3.600.6 5.800 2.900 5.800 5.700s-2.200 5.100-5.800 5.700z"/><path fill="#3c8dbc" d="M0 3.800h2.700L6.600.5v11L2.700 8.200H0z"/></svg></span><svg class="flag" width="16.5" height="11.3" viewBox="0 0 16 11"><rect width="16" height="11" fill="#e0252d"/><rect y="2.750" width="16" height="5.500" fill="#fbe22a"/><rect x="3.200" y="3.600" width="2.600" height="3.800" rx=".6" fill="#c0703a"/></svg><span class="tg" style="letter-spacing:-0.28px">(214001)</span></td><td class="c7"><span class="lbl blk ts">TS2</span><span class="lbl wht">DMR</span></td><td class="c8"><span class="sig"><svg class="ic" width="13" height="12" viewBox="1 4 12 11"><path fill="#555" d="M1 12h2.400v3H1z"/><path fill="#555" d="M4.200 9.500h2.400V15H4.200z"/><path fill="#ddd" d="M7.400 7h2.400v8H7.400zm3.200-3H13v11h-2.400z"/></svg></span><span style="letter-spacing:-0.70px">S6</span></td><td class="c9"><span style="letter-spacing:-0.21px">-107</span></td><td class="c10">3</td><td class="c11"><span style="letter-spacing:-0.06px">0% (0/30)</span></td></tr>
<tr><td class="c1">55 Minutes</td><td class="c2"><span style="letter-spacing:-0.40px">YSF Client</span></td><td class="c3"><svg class="flag" width="16.5" height="11.3" viewBox="0 0 16 11"><rect width="16" height="11" fill="#fff"/><rect y="0.00" width="16" height=".85" fill="#d9333f"/><rect y="1.69" width="16" height=".85" fill="#d9333f"/><rect y="3.38" width="16" height=".85" fill="#d9333f"/><rect y="5.08" width="16" height=".85" fill="#d9333f"/><rect y="6.77" width="16" height=".85" fill="#d9333f"/><rect y="8.46" width="16" height=".85" fill="#d9333f"/><rect y="10.15" width="16" height=".85" fill="#d9333f"/><rect width="7.500" height="6" fill="#5566b0"/></svg><a style="letter-spacing:-0.35px">KN4ITN</a> <span style="letter-spacing:-0.14px">[Jose] (3131639)</span></td><td class="c4"><span style="letter-spacing:-0.35px">KN4ITN</span></td><td class="c5"><span style="letter-spacing:-0.87px">REFLECTOR (0)</span></td><td class="c6"><span class="dst"><svg class="ic" width="15.5" height="14" viewBox=".2 .8 15.900 14.200"><g fill="none" stroke="currentColor" stroke-width="1.900"><circle cx="6" cy="4.600" r="3"/><path d="M1 14.200c0-3.300 1.600-5.300 5-5.300s5 2 5 5.300z" stroke-linejoin="round"/><path d="M10.500 1.800a2.800 2.800 0 0 1 .6 5.300M12 9.200c2.300.4 3.300 2.200 3.300 5H13"/></g></svg></span><span class="vol"><svg class="ic" width="14" height="12" viewBox="0 0 14 12"><path fill="#a5cbe3" d="M8 .3c3.600.6 5.800 2.900 5.800 5.700s-2.200 5.100-5.800 5.700z"/><path fill="#3c8dbc" d="M0 3.800h2.700L6.600.5v11L2.700 8.200H0z"/></svg></span><svg class="flag" width="16.5" height="11.3" viewBox="0 0 16 11"><rect width="16" height="11" fill="#e0252d"/><rect y="2.750" width="16" height="5.500" fill="#fbe22a"/><rect x="3.200" y="3.600" width="2.600" height="3.800" rx=".6" fill="#c0703a"/></svg><span class="tg" style="letter-spacing:-0.28px">(214001)</span></td><td class="c7"><span class="lbl blk">C4FM</span></td><td class="c8"></td><td class="c9">0</td><td class="c10">3</td><td class="c11"></td></tr>
<tr><td class="c1">70 Minutes</td><td class="c2"><span style="letter-spacing:-0.40px">YSF Client</span></td><td class="c3"><svg class="flag" width="16.5" height="11.3" viewBox="0 0 16 11"><rect width="16" height="11" fill="#e7262c"/><rect width="6.400" height="11" fill="#337a2e"/><circle cx="6.400" cy="5.500" r="1.800" fill="#f1cf2a"/><circle cx="6.400" cy="5.500" r="1" fill="#d9482c"/></svg><a style="letter-spacing:-0.99px">CT2JCG</a> <span style="letter-spacing:-0.07px">[Paulo] (2683116)</span></td><td class="c4"><span style="letter-spacing:-0.99px">CT2JCG</span></td><td class="c5"><span style="letter-spacing:-0.87px">REFLECTOR (0)</span></td><td class="c6"><span class="dst"><svg class="ic" width="15.5" height="14" viewBox=".2 .8 15.900 14.200"><g fill="none" stroke="currentColor" stroke-width="1.900"><circle cx="6" cy="4.600" r="3"/><path d="M1 14.200c0-3.300 1.600-5.300 5-5.300s5 2 5 5.300z" stroke-linejoin="round"/><path d="M10.500 1.800a2.800 2.800 0 0 1 .6 5.300M12 9.200c2.300.4 3.300 2.200 3.300 5H13"/></g></svg></span><span class="vol"><svg class="ic" width="14" height="12" viewBox="0 0 14 12"><path fill="#a5cbe3" d="M8 .3c3.600.6 5.800 2.900 5.800 5.700s-2.200 5.100-5.800 5.700z"/><path fill="#3c8dbc" d="M0 3.800h2.700L6.600.5v11L2.700 8.200H0z"/></svg></span><svg class="flag" width="16.5" height="11.3" viewBox="0 0 16 11"><rect width="16" height="11" fill="#e0252d"/><rect y="2.750" width="16" height="5.500" fill="#fbe22a"/><rect x="3.200" y="3.600" width="2.600" height="3.800" rx=".6" fill="#c0703a"/></svg><span class="tg" style="letter-spacing:-0.28px">(214001)</span></td><td class="c7"><span class="lbl blk">C4FM</span></td><td class="c8"></td><td class="c9">0</td><td class="c10">1</td><td class="c11"></td></tr>
<tr class="dmr2"><td class="c1">87 Minutes</td><td class="c2"><span style="letter-spacing:-0.53px">MMDVM Host</span></td><td class="c3"><svg class="flag" width="16.5" height="11.3" viewBox="0 0 16 11"><rect width="16" height="11" fill="#e0252d"/><rect y="2.750" width="16" height="5.500" fill="#fbe22a"/><rect x="3.200" y="3.600" width="2.600" height="3.800" rx=".6" fill="#c0703a"/></svg><a style="letter-spacing:-0.85px">EB5FVH</a> <span style="letter-spacing:-0.15px">[Felix] (2145046)</span></td><td class="c4"><span style="letter-spacing:-0.77px">EB5FVH FELIX</span><br><span style="letter-spacing:-0.83px">AGUILAS</span></td><td class="c5"><svg class="flag" width="16.5" height="11.3" viewBox="0 0 16 11"><rect width="16" height="11" fill="#e0252d"/><rect y="2.750" width="16" height="5.500" fill="#fbe22a"/><rect x="3.200" y="3.600" width="2.600" height="3.800" rx=".6" fill="#c0703a"/></svg><a class="o" style="letter-spacing:-0.85px">EB5FVH</a><br><a class="o2" style="letter-spacing:-0.25px">(214504610)</a></td><td class="c6"><span class="dst"><svg class="ic" width="15.5" height="14" viewBox=".2 .8 15.900 14.200"><g fill="none" stroke="currentColor" stroke-width="1.900"><circle cx="6" cy="4.600" r="3"/><path d="M1 14.200c0-3.300 1.600-5.300 5-5.300s5 2 5 5.300z" stroke-linejoin="round"/><path d="M10.500 1.800a2.800 2.800 0 0 1 .6 5.300M12 9.200c2.300.4 3.300 2.200 3.300 5H13"/></g></svg></span><span class="vol"><svg class="ic" width="14" height="12" viewBox="0 0 14 12"><path fill="#a5cbe3" d="M8 .3c3.600.6 5.800 2.900 5.800 5.700s-2.200 5.100-5.800 5.700z"/><path fill="#3c8dbc" d="M0 3.800h2.700L6.600.5v11L2.700 8.200H0z"/></svg></span><svg class="flag" width="16.5" height="11.3" viewBox="0 0 16 11"><rect width="16" height="11" fill="#e0252d"/><rect y="2.750" width="16" height="5.500" fill="#fbe22a"/><rect x="3.200" y="3.600" width="2.600" height="3.800" rx=".6" fill="#c0703a"/></svg><span class="tg" style="letter-spacing:-0.28px">(214001)</span></td><td class="c7"><span class="lbl wht">DMR</span></td><td class="c8"><span class="star"><svg class="ic" width="13.5" height="12.5" viewBox="0.700 0.800 14.600 14.100"><path fill="currentColor" d="M8 .8l2.200 4.700 5.100.7-3.700 3.600.9 5.100L8 12.400l-4.500 2.500.9-5.100L.7 6.200l5.100-.7z"/></svg></span></td><td class="c9"></td><td class="c10">0</td><td class="c11"><span style="letter-spacing:-0.17px">12.5% (1/8)</span></td></tr>
<tr><td class="c1">93 Minutes</td><td class="c2"><span style="letter-spacing:-0.40px">YSF Client</span></td><td class="c3"><svg class="flag" width="16.5" height="11.3" viewBox="0 0 16 11"><rect width="16" height="11" fill="#e0252d"/><rect y="2.750" width="16" height="5.500" fill="#fbe22a"/><rect x="3.200" y="3.600" width="2.600" height="3.800" rx=".6" fill="#c0703a"/></svg><a style="letter-spacing:-1.15px">EA7IYR</a> <span style="letter-spacing:-0.10px">[Juan Carlos] (2147004)</span></td><td class="c4"><span style="letter-spacing:-1.15px">EA7IYR</span></td><td class="c5"><span style="letter-spacing:-0.87px">REFLECTOR (0)</span></td><td class="c6"><span class="dst"><svg class="ic" width="15.5" height="14" viewBox=".2 .8 15.900 14.200"><g fill="none" stroke="currentColor" stroke-width="1.900"><circle cx="6" cy="4.600" r="3"/><path d="M1 14.200c0-3.300 1.600-5.300 5-5.300s5 2 5 5.300z" stroke-linejoin="round"/><path d="M10.500 1.800a2.800 2.800 0 0 1 .6 5.300M12 9.200c2.300.4 3.300 2.200 3.300 5H13"/></g></svg></span><span class="vol"><svg class="ic" width="14" height="12" viewBox="0 0 14 12"><path fill="#a5cbe3" d="M8 .3c3.600.6 5.800 2.900 5.800 5.700s-2.200 5.100-5.800 5.700z"/><path fill="#3c8dbc" d="M0 3.800h2.700L6.600.5v11L2.700 8.200H0z"/></svg></span><svg class="flag" width="16.5" height="11.3" viewBox="0 0 16 11"><rect width="16" height="11" fill="#e0252d"/><rect y="2.750" width="16" height="5.500" fill="#fbe22a"/><rect x="3.200" y="3.600" width="2.600" height="3.800" rx=".6" fill="#c0703a"/></svg><span class="tg" style="letter-spacing:-0.28px">(214001)</span></td><td class="c7"><span class="lbl blk">C4FM</span></td><td class="c8"></td><td class="c9">0</td><td class="c10">5</td><td class="c11"></td></tr>
<tr><td class="c1">93 Minutes</td><td class="c2"><span style="letter-spacing:-0.40px">YSF Client</span></td><td class="c3"><svg class="flag" width="16.5" height="11.3" viewBox="0 0 16 11"><rect width="16" height="11" fill="#e0252d"/><rect y="2.750" width="16" height="5.500" fill="#fbe22a"/><rect x="3.200" y="3.600" width="2.600" height="3.800" rx=".6" fill="#c0703a"/></svg><a style="letter-spacing:-0.91px">EA7AQH</a> <span style="letter-spacing:-0.05px">[Delio] (2143960)</span></td><td class="c4"><span style="letter-spacing:-0.91px">EA7AQH</span></td><td class="c5"><span style="letter-spacing:-0.87px">REFLECTOR (0)</span></td><td class="c6"><span class="dst"><svg class="ic" width="15.5" height="14" viewBox=".2 .8 15.900 14.200"><g fill="none" stroke="currentColor" stroke-width="1.900"><circle cx="6" cy="4.600" r="3"/><path d="M1 14.200c0-3.300 1.600-5.300 5-5.300s5 2 5 5.300z" stroke-linejoin="round"/><path d="M10.500 1.800a2.800 2.800 0 0 1 .6 5.300M12 9.200c2.300.4 3.300 2.200 3.300 5H13"/></g></svg></span><span class="vol"><svg class="ic" width="14" height="12" viewBox="0 0 14 12"><path fill="#a5cbe3" d="M8 .3c3.600.6 5.800 2.900 5.800 5.700s-2.200 5.100-5.800 5.700z"/><path fill="#3c8dbc" d="M0 3.800h2.700L6.600.5v11L2.700 8.200H0z"/></svg></span><svg class="flag" width="16.5" height="11.3" viewBox="0 0 16 11"><rect width="16" height="11" fill="#e0252d"/><rect y="2.750" width="16" height="5.500" fill="#fbe22a"/><rect x="3.200" y="3.600" width="2.600" height="3.800" rx=".6" fill="#c0703a"/></svg><span class="tg" style="letter-spacing:-0.28px">(214001)</span></td><td class="c7"><span class="lbl blk">C4FM</span></td><td class="c8"></td><td class="c9">0</td><td class="c10">0</td><td class="c11"></td></tr>
<tr class="hle"><td class="c1">93 Minutes</td><td class="c2"><span style="letter-spacing:-0.40px">YSF Client</span></td><td class="c3"><svg class="flag" width="16.5" height="11.3" viewBox="0 0 16 11"><rect width="16" height="11" fill="#e0252d"/><rect y="2.750" width="16" height="5.500" fill="#fbe22a"/><rect x="3.200" y="3.600" width="2.600" height="3.800" rx=".6" fill="#c0703a"/></svg><a style="letter-spacing:-1.15px">EA7IYR</a> <span style="letter-spacing:-0.10px">[Juan Carlos] (2147004)</span></td><td class="c4"><span style="letter-spacing:-1.15px">EA7IYR</span></td><td class="c5"><span style="letter-spacing:-0.87px">REFLECTOR (0)</span></td><td class="c6"><span class="dst"><svg class="ic" width="15.5" height="14" viewBox=".2 .8 15.900 14.200"><g fill="none" stroke="currentColor" stroke-width="1.900"><circle cx="6" cy="4.600" r="3"/><path d="M1 14.200c0-3.300 1.600-5.300 5-5.300s5 2 5 5.300z" stroke-linejoin="round"/><path d="M10.500 1.800a2.800 2.800 0 0 1 .6 5.300M12 9.200c2.300.4 3.300 2.200 3.300 5H13"/></g></svg></span><span class="vol"><svg class="ic" width="14" height="12" viewBox="0 0 14 12"><path fill="#a5cbe3" d="M8 .3c3.600.6 5.800 2.900 5.800 5.700s-2.200 5.100-5.800 5.700z"/><path fill="#3c8dbc" d="M0 3.800h2.700L6.600.5v11L2.700 8.200H0z"/></svg></span><svg class="flag" width="16.5" height="11.3" viewBox="0 0 16 11"><rect width="16" height="11" fill="#e0252d"/><rect y="2.750" width="16" height="5.500" fill="#fbe22a"/><rect x="3.200" y="3.600" width="2.600" height="3.800" rx=".6" fill="#c0703a"/></svg><span class="tg" style="letter-spacing:-0.28px">(214001)</span></td><td class="c7"><span class="lbl blk">C4FM</span></td><td class="c8"></td><td class="c9">0</td><td class="c10">8</td><td class="c11"></td></tr>
<tr><td class="c1">94 Minutes</td><td class="c2"><span style="letter-spacing:-0.40px">YSF Client</span></td><td class="c3"><svg class="flag" width="16.5" height="11.3" viewBox="0 0 16 11"><rect width="16" height="11" fill="#e0252d"/><rect y="2.750" width="16" height="5.500" fill="#fbe22a"/><rect x="3.200" y="3.600" width="2.600" height="3.800" rx=".6" fill="#c0703a"/></svg><a style="letter-spacing:-0.91px">EA7AQH</a> <span style="letter-spacing:-0.05px">[Delio] (2143960)</span></td><td class="c4"><span style="letter-spacing:-0.91px">EA7AQH</span></td><td class="c5"><span style="letter-spacing:-0.87px">REFLECTOR (0)</span></td><td class="c6"><span class="dst"><svg class="ic" width="15.5" height="14" viewBox=".2 .8 15.900 14.200"><g fill="none" stroke="currentColor" stroke-width="1.900"><circle cx="6" cy="4.600" r="3"/><path d="M1 14.200c0-3.300 1.600-5.300 5-5.300s5 2 5 5.300z" stroke-linejoin="round"/><path d="M10.500 1.800a2.800 2.800 0 0 1 .6 5.300M12 9.200c2.300.4 3.300 2.200 3.300 5H13"/></g></svg></span><span class="vol"><svg class="ic" width="14" height="12" viewBox="0 0 14 12"><path fill="#a5cbe3" d="M8 .3c3.600.6 5.800 2.900 5.800 5.700s-2.200 5.100-5.800 5.700z"/><path fill="#3c8dbc" d="M0 3.800h2.700L6.600.5v11L2.700 8.200H0z"/></svg></span><svg class="flag" width="16.5" height="11.3" viewBox="0 0 16 11"><rect width="16" height="11" fill="#e0252d"/><rect y="2.750" width="16" height="5.500" fill="#fbe22a"/><rect x="3.200" y="3.600" width="2.600" height="3.800" rx=".6" fill="#c0703a"/></svg><span class="tg" style="letter-spacing:-0.28px">(214001)</span></td><td class="c7"><span class="lbl blk">C4FM</span></td><td class="c8"></td><td class="c9">0</td><td class="c10">12</td><td class="c11"></td></tr>
</tbody></table>
</div></div>
</section>
</div>
</div>
</body></html>
